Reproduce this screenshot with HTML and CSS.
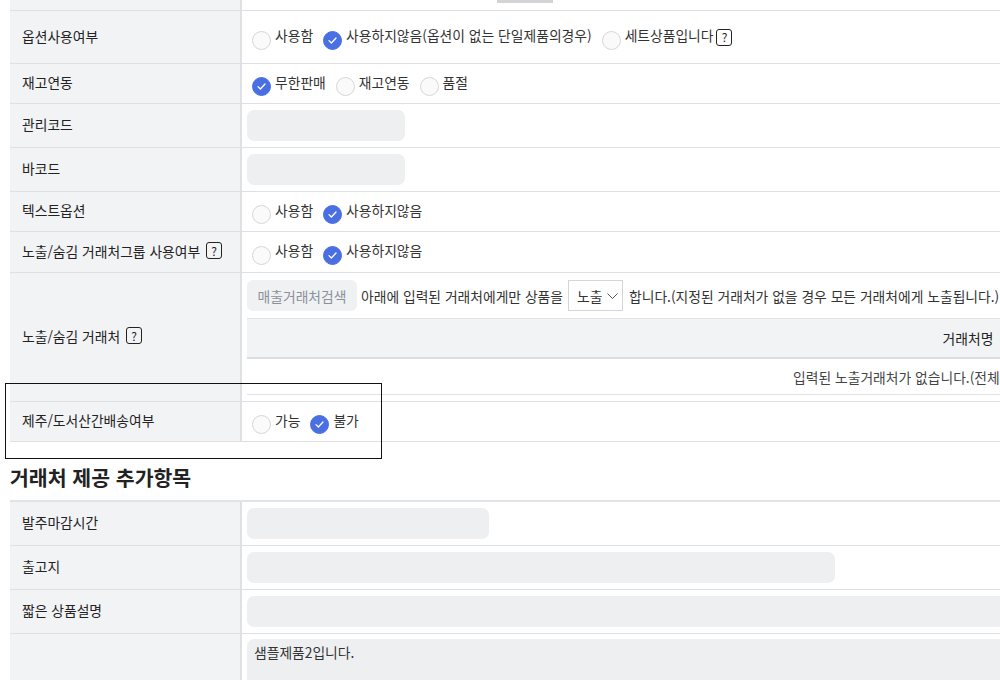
FILE: index.html
```html
<!DOCTYPE html>
<html lang="ko">
  <head>
    <meta charset="UTF-8" />
    <meta name="viewport" content="width=device-width, initial-scale=1" />
    <title>상품 등록</title>
    <link rel="stylesheet" href="styles.css">
  </head>
  <body>
    <div class="page">
      <div class="form-table first">
        <div class="row row-prev">
          <div class="th"></div>
          <div class="td"><span class="ghost-btn"></span></div>
        </div>

        <div class="row row-first">
          <div class="th">옵션사용여부</div>
          <div class="td">
            <label class="radio"><span class="dot"></span>사용함</label>
            <label class="radio on"><span class="dot"><svg width="9" height="7" viewBox="0 0 9 7"><polyline points="1,3.6 3.4,6 8,1" /></svg></span>사용하지않음(옵션이 없는 단일제품의경우)</label>
            <label class="radio tight"><span class="dot"></span>세트상품입니다</label><span class="help">?</span>
          </div>
        </div>

        <div class="row">
          <div class="th">재고연동</div>
          <div class="td">
            <label class="radio on"><span class="dot"><svg width="9" height="7" viewBox="0 0 9 7"><polyline points="1,3.6 3.4,6 8,1" /></svg></span>무한판매</label>
            <label class="radio"><span class="dot"></span>재고연동</label>
            <label class="radio"><span class="dot"></span>품절</label>
          </div>
        </div>

        <div class="row row-input">
          <div class="th">관리코드</div>
          <div class="td"><span class="field w-sm"></span></div>
        </div>

        <div class="row row-input">
          <div class="th">바코드</div>
          <div class="td"><span class="field w-sm"></span></div>
        </div>

        <div class="row">
          <div class="th">텍스트옵션</div>
          <div class="td">
            <label class="radio"><span class="dot"></span>사용함</label>
            <label class="radio on"><span class="dot"><svg width="9" height="7" viewBox="0 0 9 7"><polyline points="1,3.6 3.4,6 8,1" /></svg></span>사용하지않음</label>
          </div>
        </div>

        <div class="row row-group">
          <div class="th">노출/숨김 거래처그룹 사용여부<span class="help">?</span></div>
          <div class="td">
            <label class="radio"><span class="dot"></span>사용함</label>
            <label class="radio on"><span class="dot"><svg width="9" height="7" viewBox="0 0 9 7"><polyline points="1,3.6 3.4,6 8,1" /></svg></span>사용하지않음</label>
          </div>
        </div>

        <div class="row row-partner">
          <div class="th">노출/숨김 거래처<span class="help">?</span></div>
          <div class="td td-stack">
            <div class="partner-bar">
              <button type="button" class="soft-btn">매출거래처검색</button>
              <span>아래에 입력된 거래처에게만 상품을</span>
              <span class="select">노출<svg width="11" height="6" viewBox="0 0 11 6"><polyline points="0.5,0.5 5.5,5.5 10.5,0.5" /></svg></span>
              <span>합니다.(지정된 거래처가 없을 경우 모든 거래처에게 노출됩니다.)</span>
            </div>
            <div class="sub-table">
              <div class="sub-head">거래처명</div>
              <div class="sub-empty">입력된 노출거래처가 없습니다.(전체 거래처에게 노출됩니다.)</div>
            </div>
          </div>
        </div>

        <div class="row row-mark">
          <div class="th">제주/도서산간배송여부</div>
          <div class="td">
            <label class="radio"><span class="dot"></span>가능</label>
            <label class="radio on"><span class="dot"><svg width="9" height="7" viewBox="0 0 9 7"><polyline points="1,3.6 3.4,6 8,1" /></svg></span>불가</label>
          </div>
          <div class="highlight"></div>
        </div>
      </div>

      <h2 class="section-title">거래처 제공 추가항목</h2>

      <div class="form-table">
        <div class="row row-input">
          <div class="th">발주마감시간</div>
          <div class="td"><span class="field w-md"></span></div>
        </div>
        <div class="row row-input">
          <div class="th">출고지</div>
          <div class="td"><span class="field w-lg"></span></div>
        </div>
        <div class="row row-input">
          <div class="th">짧은 상품설명</div>
          <div class="td"><span class="field w-full"></span></div>
        </div>
        <div class="row row-area">
          <div class="th"></div>
          <div class="td"><div class="area">샘플제품2입니다.</div></div>
        </div>
      </div>
    </div>
  </body>
</html>
```

FILE: styles.css
```css
html,
body {
  overflow: hidden;
}
body {
  margin: 0;
  font-family: "Noto Sans CJK KR", "Noto Sans", sans-serif;
  font-size: 13.8px;
  color: #222;
  background: #fff;
}
.page {
  width: 1700px;
  padding-left: 10px;
}
.form-table {
  border-top: 2px solid #e2e3e6;
}
.form-table.first {
  margin-top: -32px;
}
.row {
  display: flex;
  box-sizing: border-box;
  min-height: 40px;
  border-bottom: 1px solid #dfe0e3;
}
.row-prev {
  height: 41px;
}
.row-first {
  min-height: 53px;
}
.row-input {
  min-height: 44px;
}
.row-group {
  min-height: 41px;
}
.row-mark {
  position: relative;
}
.th {
  flex: none;
  width: 232px;
  box-sizing: border-box;
  padding: 0 0 3px 12px;
  display: flex;
  align-items: center;
  background: #f2f3f5;
  border-right: 2px solid #dfe0e3;
  color: #222;
}
.td {
  flex: 1;
  padding: 0 6px 0 5px;
  display: flex;
  align-items: center;
  white-space: nowrap;
  color: #333;
}
.row-prev .td {
  align-items: flex-start;
  padding-top: 2px;
}
.ghost-btn {
  margin-left: 250px;
  width: 56px;
  height: 31px;
  background: #d3d4d6;
}

/* radios */
.radio {
  display: inline-flex;
  align-items: center;
  margin: 0 5px 4px;
}
.radio.tight {
  margin-right: 0;
}
.dot {
  width: 19px;
  height: 19px;
  box-sizing: border-box;
  margin: 10px 4px 0 0;
  border-radius: 50%;
  border: 1px solid #d6d7d9;
  background: #fafafa;
  display: flex;
  align-items: center;
  justify-content: center;
}
.radio.on .dot {
  background: #4a6fe3;
  border-color: #4a6fe3;
}
.dot svg polyline {
  fill: none;
  stroke: #fff;
  stroke-width: 1.3;
  stroke-linecap: round;
  stroke-linejoin: round;
}
.help {
  display: inline-flex;
  align-items: center;
  justify-content: center;
  width: 16px;
  height: 17px;
  box-sizing: border-box;
  border: 1.5px solid #222;
  border-radius: 3px;
  font-size: 12px;
  line-height: 1;
  color: #222;
}
.td .help {
  margin-left: 3px;
}
.th .help {
  margin-left: 6px;
}

/* inputs */
.field {
  display: block;
  height: 31px;
  background: #eeeff1;
  border-radius: 7px;
}
.w-sm {
  width: 158px;
}
.w-md {
  width: 242px;
}
.w-lg {
  width: 588px;
}
.w-full {
  width: 100%;
}
.row-area .td {
  align-items: flex-start;
  padding-top: 5px;
}
.area {
  width: 100%;
  height: 80px;
  box-sizing: border-box;
  padding: 5px 7px;
  line-height: 16px;
  background: #eeeff1;
  border-radius: 7px;
  color: #333;
}

/* partner row */
.td-stack {
  flex-direction: column;
  align-items: flex-start;
  padding-top: 7px;
  padding-bottom: 6px;
}
.partner-bar {
  display: flex;
  align-items: center;
  height: 31px;
}
.soft-btn {
  height: 31px;
  width: 110px;
  margin-right: 4px;
  border: 0;
  border-radius: 6px;
  background: #f0f1f3;
  color: #8b9099;
  font: inherit;
  padding: 0;
}
.select {
  display: inline-flex;
  align-items: center;
  justify-content: space-between;
  box-sizing: border-box;
  width: 55px;
  height: 31px;
  margin: 0 6px 0 5px;
  padding: 0 4px 0 8px;
  border: 1px solid #d4d5d8;
  background: #fff;
}
.select svg polyline {
  fill: none;
  stroke: #555;
  stroke-width: 1;
}
.sub-table {
  width: 1442px;
  margin-top: 7px;
}
.sub-head {
  height: 41px;
  box-sizing: border-box;
  border-top: 1px solid #e2e3e6;
  border-bottom: 2px solid #dcdde0;
  background: #f2f3f5;
  display: flex;
  align-items: center;
  justify-content: center;
  color: #222;
}
.sub-empty {
  height: 36px;
  box-sizing: border-box;
  border-bottom: 1px solid #e2e3e6;
  display: flex;
  align-items: center;
  justify-content: center;
  color: #444;
}
.highlight {
  position: absolute;
  left: -5px;
  top: -19px;
  width: 377px;
  height: 76px;
  box-sizing: border-box;
  border: 1px solid #111;
  pointer-events: none;
}

.section-title {
  margin: 22px 0 10px;
  font-size: 20.5px;
  line-height: 26px;
  font-weight: 700;
  color: #222;
}
```
